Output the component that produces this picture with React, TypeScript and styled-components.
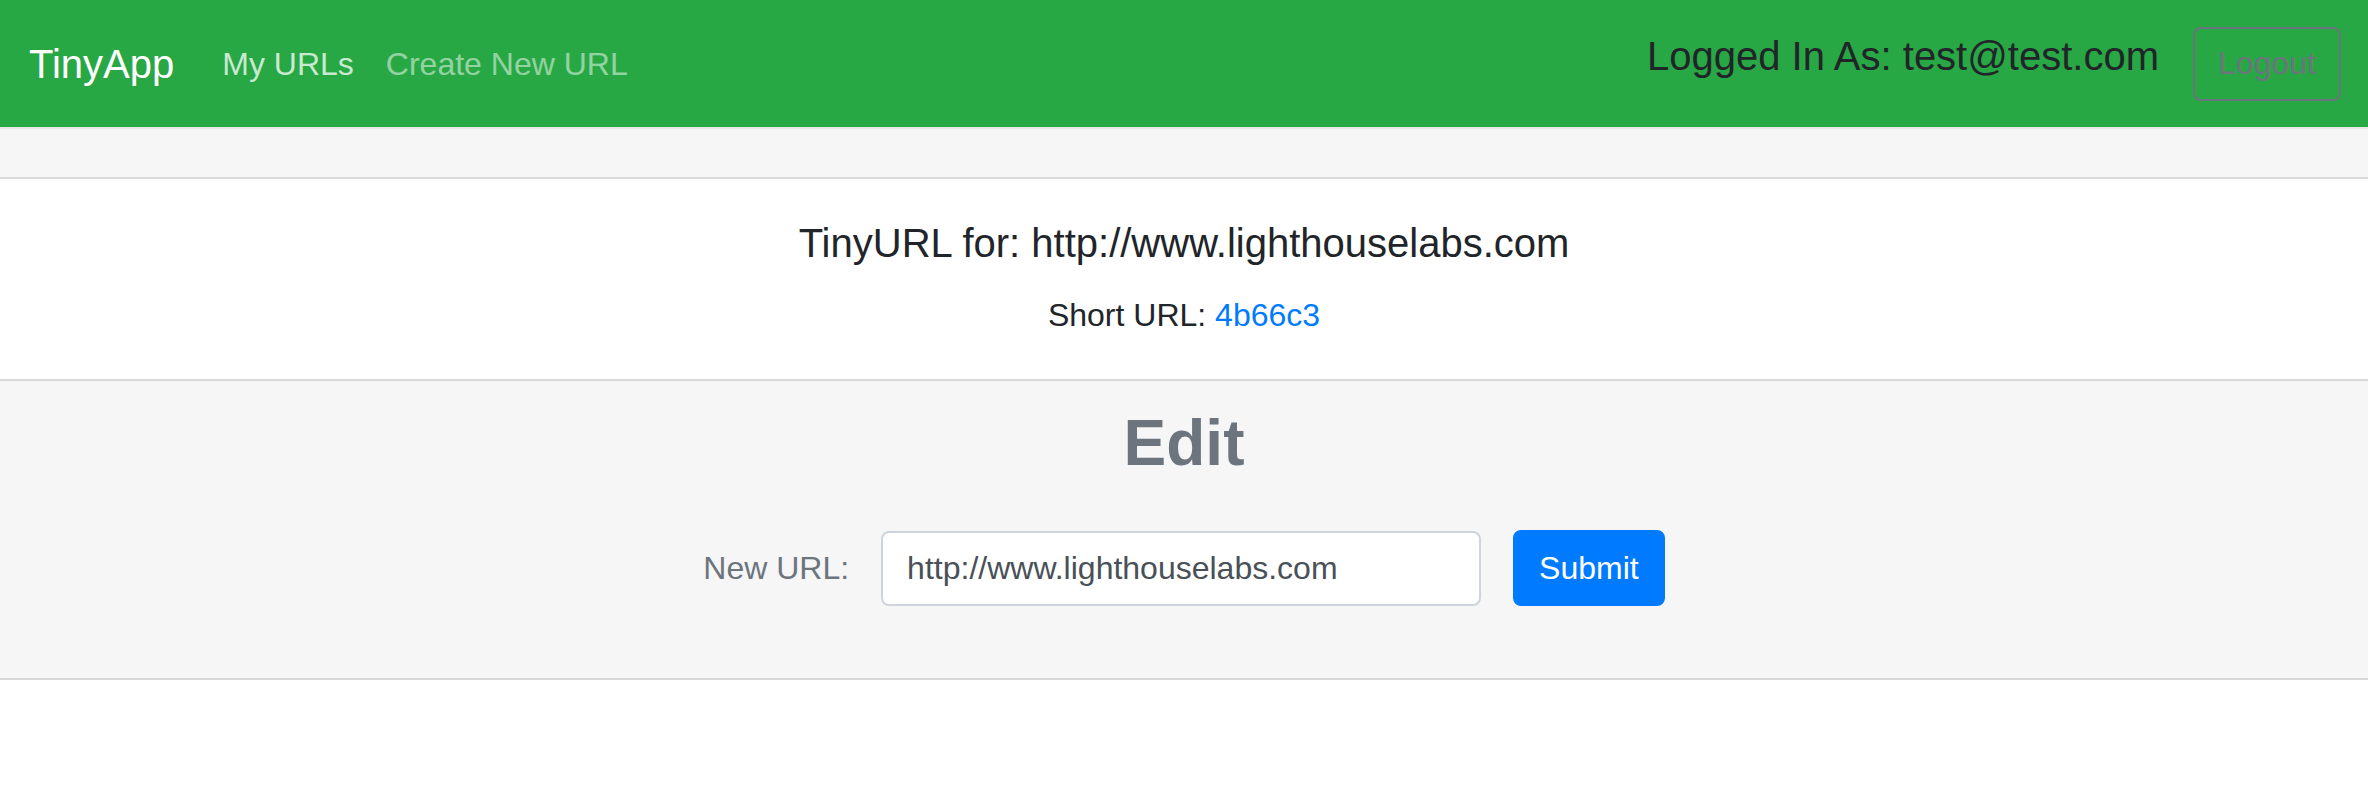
import React from "react"
import styled, { createGlobalStyle } from "styled-components"


const GlobalStyle = createGlobalStyle`
    * {
        box-sizing: border-box;
    }
    body {
        margin: 0;
        background: #fff;
        font-family: "Liberation Sans", Arial, sans-serif;
        color: #212529;
    }
`

const StyledNavbar = styled.nav`
    display: flex;
    align-items: center;
    height: 127px;
    padding: 0 27px 0 29px;
    background: #28a745;
`

const StyledBrand = styled.a`
    font-size: 40px;
    line-height: 48px;
    color: #fff;
    margin-right: 32px;
    text-decoration: none;
`

const StyledNavLink = styled.a<{ $muted?: boolean }>`
    font-size: 32px;
    line-height: 48px;
    padding: 0 16px;
    text-decoration: none;
    color: ${({ $muted }) => $muted ? "rgba(255, 255, 255, 0.5)" : "rgba(255, 255, 255, 0.75)"};
`

const StyledUserBox = styled.div`
    display: flex;
    align-items: center;
    margin-left: auto;
`

const StyledUser = styled.h5`
    font-size: 40px;
    line-height: 48px;
    font-weight: 400;
    color: #212529;
    margin: 0 34px 16px 0;
`

const StyledLogout = styled.button`
    height: 74px;
    width: 148px;
    padding: 0;
    border: 2px solid #6c757d;
    border-radius: 8px;
    background: transparent;
    color: #6c757d;
    font-family: inherit;
    font-size: 32px;
    cursor: pointer;
`

const StyledCard = styled.section`
    border-top: 2px solid #e8e8e8;
    border-bottom: 2px solid #d9d9d9;
`

const StyledHeader = styled.div`
    height: 50px;
    background: #f6f6f6;
    border-bottom: 2px solid #d9d9d9;
`

const StyledBody = styled.div`
    padding: 40px;
    text-align: center;
    background: #fff;
`

const StyledTitle = styled.h5`
    margin: 0 0 24px;
    font-size: 40px;
    line-height: 48px;
    font-weight: 400;
`

const StyledText = styled.p`
    margin: 0;
    font-size: 32px;
    line-height: 48px;
    a {
        color: #007bff;
        text-decoration: none;
    }
`

const StyledFooter = styled.div`
    padding: 24px 40px;
    background: #f6f6f6;
    border-top: 2px solid #d9d9d9;
    text-align: center;
`

const StyledEditTitle = styled.h2`
    margin: 0 0 16px;
    font-size: 64px;
    line-height: 77px;
    font-weight: 700;
    color: #6c757d;
`

const StyledForm = styled.form`
    display: flex;
    justify-content: center;
    align-items: center;
    padding: 32px 0 48px;
`

const StyledLabel = styled.label`
    font-size: 32px;
    color: #6c757d;
    margin-right: 32px;
`

const StyledInput = styled.input`
    width: 600px;
    height: 75px;
    padding: 0 24px;
    border: 2px solid #ced4da;
    border-radius: 8px;
    background: #fff;
    color: #495057;
    font-family: inherit;
    font-size: 32px;
    outline: none;
`

const StyledSubmit = styled.button`
    height: 76px;
    margin-left: 32px;
    padding: 0 24px;
    border: 2px solid #007bff;
    border-radius: 8px;
    background: #007bff;
    color: #fff;
    font-family: inherit;
    font-size: 32px;
    cursor: pointer;
`

export default function App() {
    return <>
        <GlobalStyle />

        <StyledNavbar>
            <StyledBrand href="#">TinyApp</StyledBrand>
            <StyledNavLink href="#">My URLs</StyledNavLink>
            <StyledNavLink href="#" $muted>Create New URL</StyledNavLink>
            <StyledUserBox>
                <StyledUser>Logged In As: test@test.com</StyledUser>
                <StyledLogout>Logout</StyledLogout>
            </StyledUserBox>
        </StyledNavbar>

        <StyledCard>
            <StyledHeader />

            <StyledBody>
                <StyledTitle>TinyURL for: http://www.lighthouselabs.com</StyledTitle>
                <StyledText>Short URL: <a href="#">4b66c3</a></StyledText>
            </StyledBody>

            <StyledFooter>
                <StyledEditTitle>Edit</StyledEditTitle>
                <StyledForm onSubmit={e => e.preventDefault()}>
                    <StyledLabel htmlFor="longURL">New URL:</StyledLabel>
                    <StyledInput id="longURL" type="text" defaultValue="http://www.lighthouselabs.com" />
                    <StyledSubmit type="submit">Submit</StyledSubmit>
                </StyledForm>
            </StyledFooter>
        </StyledCard>
    </>
}
